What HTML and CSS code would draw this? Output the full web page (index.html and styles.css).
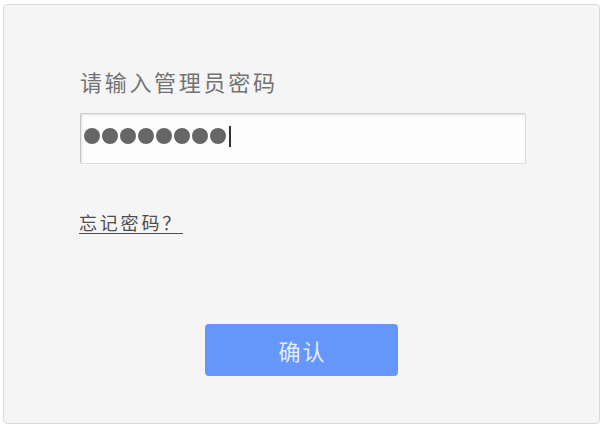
FILE: index.html
```html
<!DOCTYPE html>
<html lang="zh-CN">
<head>
<meta charset="utf-8">
<title>登录</title>
<link rel="stylesheet" href="styles.css">
</head>
<body>
<div class="panel">
  <div class="fields">
    <div class="label">请输入管理员密码</div>
    <div class="pwd-field">
      <span class="dot"></span><span class="dot"></span><span class="dot"></span><span class="dot"></span><span class="dot"></span><span class="dot"></span><span class="dot"></span><span class="dot"></span><span class="caret"></span>
    </div>
    <a class="forgot" href="#">忘记密码？</a>
  </div>
  <div class="actions">
    <button class="confirm" type="button">确认</button>
  </div>
</div>
</body>
</html>
```

FILE: styles.css
```css
html, body {
  margin: 0;
  padding: 0;
  background: #ffffff;
}
body {
  font-family: "Noto Sans CJK SC", "Noto Sans", sans-serif;
}
.panel {
  box-sizing: border-box;
  margin: 4px 0 0 3px;
  width: 597px;
  height: 420px;
  border: 1px solid #d9d9d9;
  border-radius: 4px;
  background: #f5f5f5;
  display: flex;
  flex-direction: column;
}
.fields {
  padding: 62px 0 0 76px;
  display: flex;
  flex-direction: column;
  align-items: flex-start;
}
.label {
  font-size: 22px;
  line-height: 28px;
  letter-spacing: 2.7px;
  color: #737373;
}
.pwd-field {
  box-sizing: border-box;
  margin-top: 18px;
  width: 446px;
  height: 51px;
  background: #fdfdfd;
  border: 1px solid #dcdcdc;
  border-top-color: #cfcfcf;
  border-left-color: #c4c4c4;
  border-radius: 2px;
  box-shadow: inset 1px 1px 2px rgba(0, 0, 0, 0.12);
  display: flex;
  align-items: center;
  gap: 2px;
  padding: 0 0 5px 3px;
}
.dot {
  width: 16px;
  height: 16px;
  border-radius: 50%;
  background: #666666;
}
.caret {
  width: 2px;
  height: 21px;
  background: #333333;
  margin-left: 1px;
}
.forgot {
  margin-top: 45px;
  margin-left: -1px;
  font-size: 18px;
  line-height: 26px;
  letter-spacing: 2.8px;
  color: #4d4d4d;
  text-decoration: underline;
  text-underline-offset: 3px;
}
.actions {
  display: flex;
  justify-content: center;
  margin-top: 89px;
}
.confirm {
  width: 193px;
  height: 52px;
  border: none;
  border-radius: 4px;
  background: #6597fa;
  color: #e3ebff;
  font-family: "Noto Sans CJK SC", "Noto Sans", sans-serif;
  font-size: 22px;
  letter-spacing: 2px;
  padding: 0 0 0 2px;
}
```
